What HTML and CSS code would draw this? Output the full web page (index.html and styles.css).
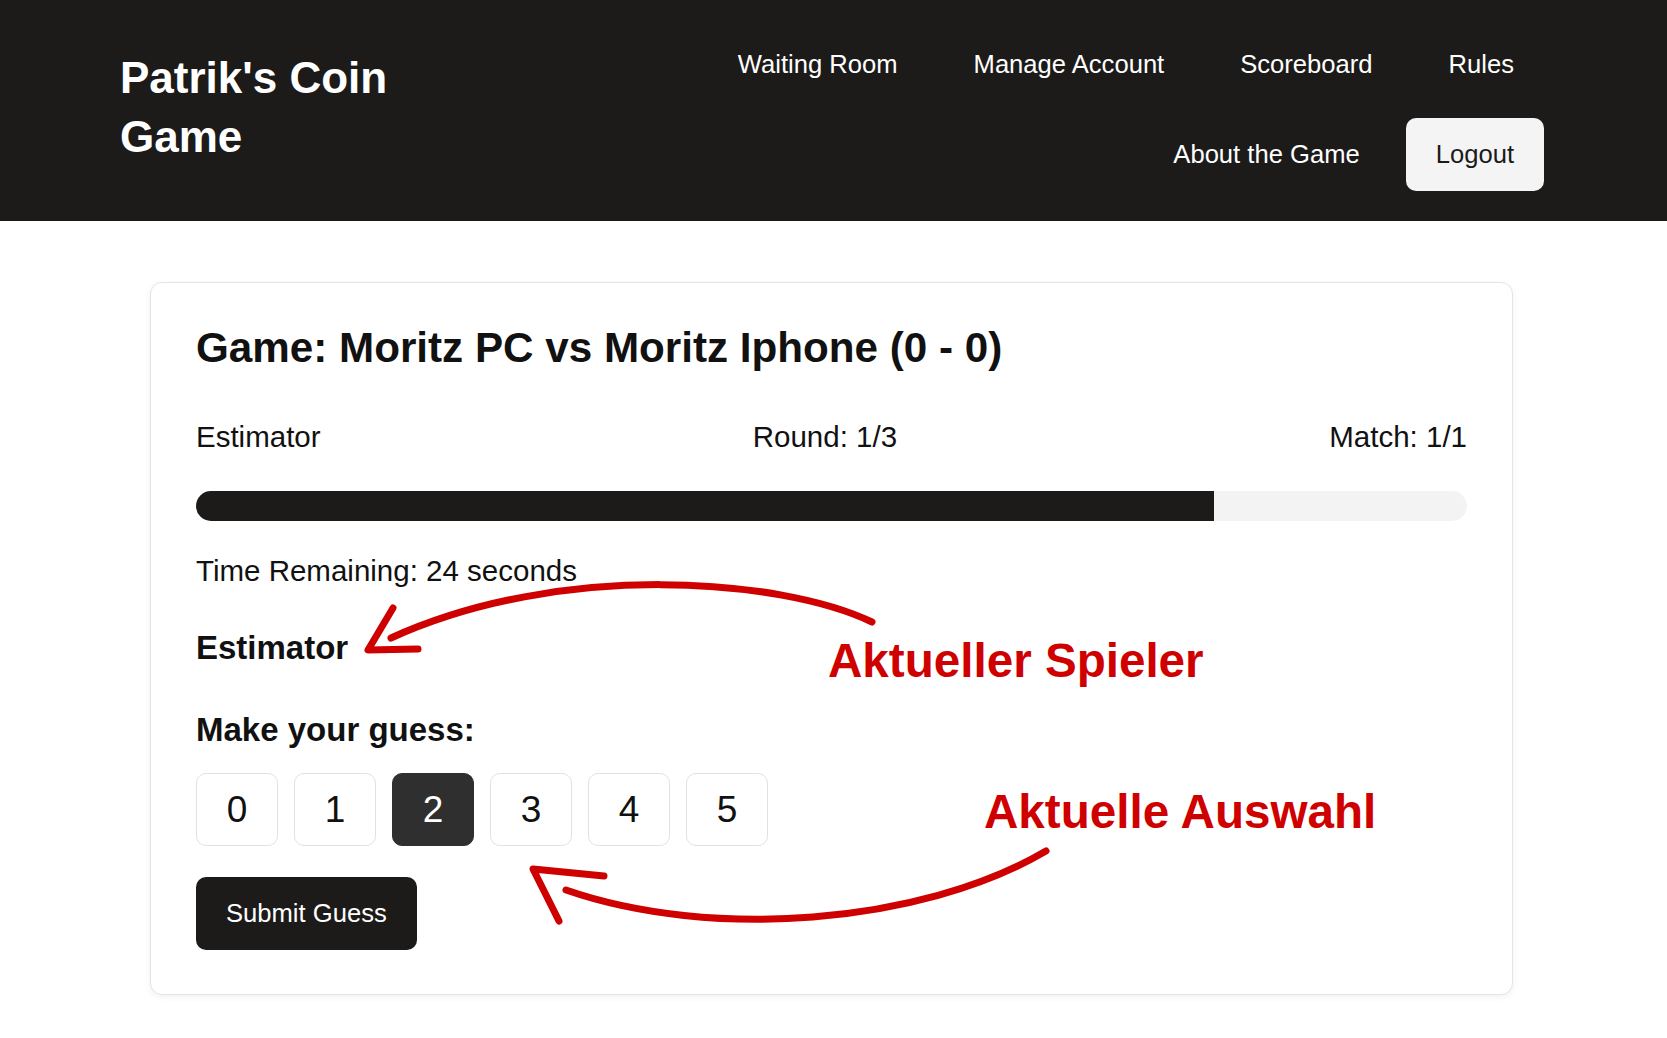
FILE: index.html
```html
<!DOCTYPE html>
<html lang="en">
<head>
<meta charset="utf-8">
<title>Patrik's Coin Game</title>
<link rel="stylesheet" href="styles.css">
</head>
<body>
<header class="site-header">
  <div class="brand">Patrik's Coin Game</div>
  <nav class="main-nav">
    <a class="nav-link" href="#">Waiting Room</a>
    <a class="nav-link" href="#">Manage Account</a>
    <a class="nav-link" href="#">Scoreboard</a>
    <a class="nav-link" href="#">Rules</a>
    <a class="nav-link" href="#">About the Game</a>
    <a class="nav-link nav-logout" href="#">Logout</a>
  </nav>
</header>

<main class="page">
  <section class="game-card">
    <h1 class="game-title">Game: Moritz PC vs Moritz Iphone (0 - 0)</h1>
    <div class="status-row">
      <span>Estimator</span>
      <span>Round: 1/3</span>
      <span>Match: 1/1</span>
    </div>
    <div class="progress"><div class="progress-fill" style="width:80.1%"></div></div>
    <p class="timer">Time Remaining: 24 seconds</p>
    <h3 class="role">Estimator</h3>
    <h3 class="prompt">Make your guess:</h3>
    <div class="guess-options">
      <button class="guess-btn">0</button>
      <button class="guess-btn">1</button>
      <button class="guess-btn is-selected">2</button>
      <button class="guess-btn">3</button>
      <button class="guess-btn">4</button>
      <button class="guess-btn">5</button>
    </div>
    <button class="submit-btn">Submit Guess</button>
  </section>
</main>

<svg class="annotations" width="1667" height="1038" viewBox="0 0 1667 1038">
  <g class="anno-stroke">
    <path d="M872,622 C780,578 560,561 391,638"/>
    <path d="M393,608 L368,650 L418,649"/>
    <path d="M1046,851 C920,925 710,940 566,890"/>
    <path d="M604,876 L533,869 L559,921"/>
  </g>
  <text class="anno-text" x="828" y="677">Aktueller Spieler</text>
  <text class="anno-text" x="984" y="828">Aktuelle Auswahl</text>
</svg>
</body>
</html>
```

FILE: styles.css
```css
* {
  box-sizing: border-box;
}

html, body {
  margin: 0;
  padding: 0;
}

body {
  position: relative;
  min-height: 1038px;
  background: #ffffff;
  color: #111111;
  font-family: "Liberation Sans", Arial, Helvetica, sans-serif;
}

/* Header */
.site-header {
  display: flex;
  justify-content: space-between;
  align-items: center;
  height: 221px;
  padding: 28px 123px 30px 120px;
  background: #1c1b1a;
}

.brand {
  width: 300px;
  margin-bottom: 5px;
  color: #ffffff;
  font-size: 44px;
  font-weight: 700;
  line-height: 59px;
}

.main-nav {
  display: flex;
  flex-wrap: wrap;
  justify-content: flex-end;
  align-items: center;
  width: 860px;
  row-gap: 17px;
  column-gap: 16px;
}

.nav-link {
  display: block;
  padding: 22px 30px;
  color: #ffffff;
  font-size: 25.6px;
  line-height: 29px;
  text-decoration: none;
  border-radius: 10px;
}

.nav-logout {
  background: #f4f4f4;
  color: #1c1b1a;
}

/* Main */
.page {
  padding: 61px 154px 40px 150px;
}

.game-card {
  padding: 40px 45px 44px;
  border: 1px solid #e4e4e4;
  border-radius: 12px;
  background: #ffffff;
  box-shadow: 0 2px 6px rgba(0, 0, 0, 0.06);
}

.game-title {
  margin: 0 0 46px;
  font-size: 42.2px;
  font-weight: 700;
  line-height: 50px;
}

.status-row {
  display: flex;
  justify-content: space-between;
  font-size: 29.5px;
  line-height: 35px;
}

.progress {
  height: 30px;
  margin-top: 37px;
  border-radius: 15px;
  background: #f3f3f3;
  overflow: hidden;
}

.progress-fill {
  height: 100%;
  background: #1c1b1a;
}

.timer {
  margin: 32px 0 0;
  font-size: 29.5px;
  line-height: 35px;
}

.role,
.prompt {
  margin: 0;
  font-size: 33px;
  font-weight: 700;
  line-height: 40px;
}

.role {
  margin-top: 40px;
}

.prompt {
  margin-top: 42px;
}

.guess-options {
  display: flex;
  gap: 16px;
  margin-top: 23px;
}

.guess-btn {
  display: flex;
  align-items: center;
  justify-content: center;
  width: 82px;
  height: 73px;
  padding: 0;
  border: 1.5px solid #e2e2e2;
  border-radius: 10px;
  background: #ffffff;
  color: #111111;
  font-family: inherit;
  font-size: 37px;
}

.guess-btn.is-selected {
  background: #2f2f2f;
  border-color: #2f2f2f;
  color: #ffffff;
}

.submit-btn {
  display: block;
  margin-top: 31px;
  padding: 22px 30px;
  border: none;
  border-radius: 10px;
  background: #1c1b1a;
  color: #ffffff;
  font-family: inherit;
  font-size: 25.6px;
  line-height: 29px;
}

/* Annotation overlay */
.annotations {
  position: absolute;
  top: 0;
  left: 0;
  pointer-events: none;
}

.anno-stroke path {
  fill: none;
  stroke: #cf0000;
  stroke-width: 7;
  stroke-linecap: round;
  stroke-linejoin: round;
}

.anno-text {
  fill: #cf0000;
  font-family: "Liberation Sans", Arial, Helvetica, sans-serif;
  font-size: 47.6px;
  font-weight: 700;
}
```
